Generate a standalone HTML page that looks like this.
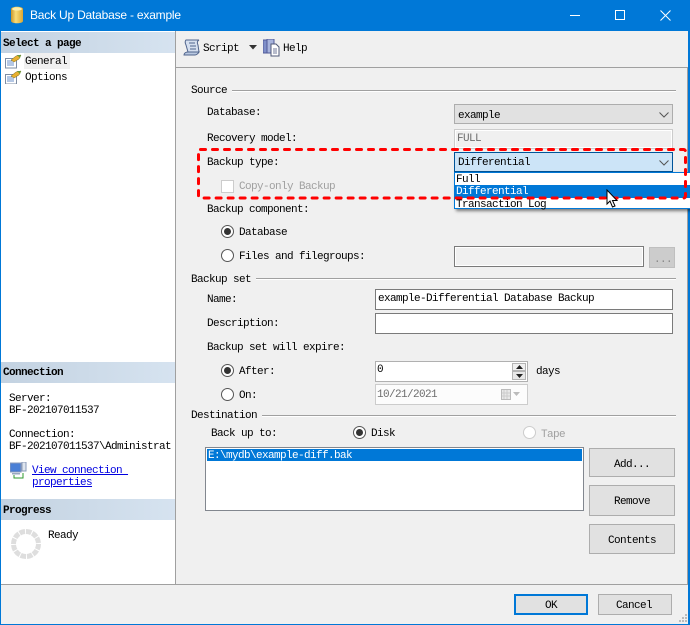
<!DOCTYPE html>
<html><head><meta charset="utf-8"><style>
html,body{margin:0;padding:0;background:#fff}
#w{position:relative;width:690px;height:625px;overflow:hidden;background:#f0f0f0;font-family:"Liberation Mono",monospace;font-size:11px;letter-spacing:-.6px;color:#000}
#w div,#w span.t{position:absolute;box-sizing:border-box;white-space:pre}
.t{line-height:14px;height:14px;margin-top:1px}
.g{color:#a0a0a0}
.b{font-weight:bold}
.hd{left:1px;width:174px;height:21px;background:linear-gradient(90deg,#c3d2e1,#d6e3f0)}
.ln{height:1px;background:#a0a0a0;box-shadow:0 1px 0 #fff}
.in{background:#fff;border:1px solid #7a7a7a}
.btn{background:#e1e1e1;border:1px solid #adadad}
svg{position:absolute}
</style></head><body><div id="w">
<div style="left:0;top:0;width:690px;height:625px;border:1px solid #0078d7;border-right-width:2px;border-bottom-width:1px"></div>
<div style="left:0;top:0;width:690px;height:31px;background:#0078d7"></div>
<svg style="left:10px;top:6px" width="14" height="18" viewBox="0 0 14 18"><defs><linearGradient id="c" x1="0" x2="1"><stop offset="0" stop-color="#c9962a"/><stop offset=".4" stop-color="#f8dc78"/><stop offset="1" stop-color="#d9a632"/></linearGradient></defs><path d="M1 3c0-3 12-3 12 0v12c0 3-12 3-12 0z" fill="url(#c)"/><ellipse cx="7" cy="3" rx="5" ry="1.6" fill="#fbeeb0"/></svg>
<span class="t" style="left:30px;top:7px;font:12px/15px 'Liberation Sans',sans-serif;letter-spacing:-.2px;color:#fff;height:15px">Back Up Database - example</span>
<div style="left:570px;top:15px;width:10px;height:1px;background:#fff"></div>
<div style="left:615px;top:10px;width:10px;height:10px;border:1px solid #fff"></div>
<svg style="left:660px;top:10px" width="11" height="11"><path d="M.5.5l10 10M10.500.5l-10 10" stroke="#fff" fill="none"/></svg>

<div style="left:1px;top:31px;width:174px;height:553px;background:#fff"></div>
<div style="left:175px;top:31px;width:1px;height:553px;background:#a0a0a0"></div>
<div style="left:1px;top:584px;width:687px;height:1px;background:#a0a0a0"></div>
<div style="left:176px;top:67px;width:512px;height:1px;background:#a0a0a0"></div>
<div style="left:687px;top:67px;width:1px;height:517px;background:#a0a0a0"></div>

<div class="hd" style="top:32px"></div>
<span class="t b" style="left:3px;top:36px">Select a page</span>
<div style="left:24px;top:53px;width:46px;height:16px;background:#f0f0f0"></div>
<svg style="left:5px;top:54px" width="17" height="30" viewBox="0 0 17 30"><g id="ic"><rect x=".5" y="4.500" width="11" height="9.500" fill="#fff" stroke="#7d8ca3"/><path d="M2 7h7M2 9h7M2 11h7" stroke="#6a8fc8"/><path d="M6 6l5-4 5-1-2 4-5 3z" fill="#e8b030" stroke="#7c6a20" stroke-width=".5"/><path d="M12 1l4 0-1 3z" fill="#6a9a3a"/></g><use href="#ic" y="16"/></svg>
<span class="t" style="left:25px;top:54px">General</span>
<span class="t" style="left:25px;top:70px">Options</span>

<div class="hd" style="top:362px"></div>
<span class="t b" style="left:3px;top:365px">Connection</span>
<span class="t" style="left:9px;top:391px">Server:</span>
<span class="t" style="left:9px;top:403px">BF-202107011537</span>
<span class="t" style="left:9px;top:427px">Connection:</span>
<span class="t" style="left:9px;top:439px">BF-202107011537\Administrat</span>
<svg style="left:10px;top:462px" width="17" height="17" viewBox="0 0 17 17"><rect x="0" y="1" width="11" height="9" fill="#4a7fd6" stroke="#8a9ab8"/><rect x="2" y="11" width="8" height="1.500" fill="#9aa8c0"/><rect x="12" y="0" width="4" height="9" fill="#dfe5ee" stroke="#8a9ab8"/><path d="M4 13v3h9v-5" stroke="#2f9a2f" fill="none"/></svg>
<span class="t" style="left:32px;top:463px;color:#0000e0;text-decoration:underline">View connection </span>
<span class="t" style="left:32px;top:475px;color:#0000e0;text-decoration:underline">properties</span>

<div class="hd" style="top:499px"></div>
<span class="t b" style="left:3px;top:503px">Progress</span>
<svg style="left:11px;top:529px" width="30" height="30" viewBox="0 0 30 30"><circle cx="15" cy="15" r="12.500" fill="none" stroke="#dedede" stroke-width="5" stroke-dasharray="5.500 1"/></svg>
<span class="t" style="left:48px;top:528px">Ready</span>

<svg style="left:183px;top:39px" width="18" height="18" viewBox="0 0 18 18"><path d="M3 1h13c-2 1-2 3-1 5l1 7H5L3 6C2 4 2 2 3 1z" fill="#d5dfef" stroke="#50648c"/><path d="M5 13c-2 0-4 1-4 3h11c1 0 3-1 4-3z" fill="#b9c8e0" stroke="#50648c"/><path d="M6 4h6M7 7h6M7 10h6" stroke="#50648c"/></svg>
<span class="t" style="left:203px;top:41px">Script</span>
<svg style="left:249px;top:45px" width="9" height="5"><path d="M0 0h8L4 4.500z" fill="#333"/></svg>
<svg style="left:263px;top:39px" width="17" height="18" viewBox="0 0 17 18"><rect x="0" y="1" width="8" height="13" fill="#7f8fc8" stroke="#505a98"/><rect x="4" y="0" width="7" height="14" fill="#a8b4dc" stroke="#505a98"/><path d="M8 5h5l3 3v9H8z" fill="#fff" stroke="#505a78"/><path d="M10 10h4M10 12h4M10 14h4" stroke="#707a98"/></svg>
<span class="t" style="left:283px;top:41px">Help</span>

<span class="t" style="left:191px;top:83px">Source</span>
<div class="ln" style="left:232px;top:90px;width:444px"></div>
<span class="t" style="left:207px;top:105px">Database:</span>
<span class="t" style="left:207px;top:131px">Recovery model:</span>
<div style="left:454px;top:104px;width:219px;height:20px;background:#e1e1e1;border:1px solid #adadad"></div>
<span class="t" style="left:458px;top:108px">example</span>
<svg style="left:659px;top:112px" width="10" height="6"><path d="M.5.500l4.500 4.500 4.500-4.500" stroke="#555" fill="none"/></svg>
<div style="left:454px;top:129px;width:219px;height:20px;border:1px solid #ccc;box-shadow:inset 0 0 0 1px #fff"></div>
<span class="t" style="left:457px;top:131px;color:#6d6d6d">FULL</span>
<span class="t" style="left:207px;top:155px">Backup type:</span>
<div style="left:221px;top:180px;width:13px;height:13px;background:#fff;border:1px solid #ccc"></div>
<span class="t g" style="left:239px;top:179px">Copy-only Backup</span>
<span class="t" style="left:207px;top:202px">Backup component:</span>

<svg style="left:221px;top:225px" width="13" height="13"><circle cx="6.500" cy="6.500" r="6" fill="#fff" stroke="#555"/><circle cx="6.500" cy="6.500" r="3.500" fill="#333"/></svg>
<span class="t" style="left:239px;top:225px">Database</span>
<svg style="left:221px;top:249px" width="13" height="13"><circle cx="6.500" cy="6.500" r="6" fill="#fff" stroke="#555"/></svg>
<span class="t" style="left:239px;top:249px">Files and filegroups:</span>
<div style="left:454px;top:246px;width:190px;height:21px;background:#f0f0f0;border:1px solid #7a7a7a;box-shadow:inset 0 0 0 1px #fff"></div>
<div style="left:649px;top:247px;width:26px;height:21px;background:#ccc;border:1px solid #bfbfbf"></div>
<span class="t" style="left:654px;top:252px;color:#888">...</span>

<span class="t" style="left:191px;top:272px">Backup set</span>
<div class="ln" style="left:256px;top:278px;width:420px"></div>
<span class="t" style="left:207px;top:292px">Name:</span>
<div class="in" style="left:375px;top:289px;width:298px;height:21px"></div>
<span class="t" style="left:378px;top:291px">example-Differential Database Backup</span>
<span class="t" style="left:207px;top:316px">Description:</span>
<div class="in" style="left:375px;top:313px;width:298px;height:21px"></div>
<span class="t" style="left:207px;top:340px">Backup set will expire:</span>

<svg style="left:221px;top:364px" width="13" height="13"><circle cx="6.500" cy="6.500" r="6" fill="#fff" stroke="#555"/><circle cx="6.500" cy="6.500" r="3.500" fill="#333"/></svg>
<span class="t" style="left:239px;top:364px">After:</span>
<div style="left:375px;top:361px;width:153px;height:21px;background:#fff;border:1px solid #b0b0b0"></div>
<span class="t" style="left:377px;top:362px">0</span>
<div style="left:512px;top:363px;width:14px;height:8px;background:#f0f0f0;border:1px solid #b4b4b4"></div>
<div style="left:512px;top:371px;width:14px;height:9px;background:#e8e8e8;border:1px solid #b4b4b4"></div>
<svg style="left:516px;top:365px" width="7" height="13"><path d="M3.500 0L7 4H0zM0 9h7l-3.500 4z" fill="#222"/></svg>
<span class="t" style="left:536px;top:364px">days</span>
<svg style="left:221px;top:388px" width="13" height="13"><circle cx="6.500" cy="6.500" r="6" fill="#fff" stroke="#555"/></svg>
<span class="t" style="left:239px;top:388px">On:</span>
<div style="left:375px;top:384px;width:153px;height:21px;background:#fcfcfc;border:1px solid #ccc"></div>
<span class="t" style="left:377px;top:387px;color:#6d6d6d">10/21/2021</span>
<svg style="left:501px;top:388px" width="25" height="13"><rect x=".5" y="1.500" width="9" height="10" fill="#e8e8e8" stroke="#bbb"/><path d="M3 2v9M6 2v9M1 5h8M1 8h8" stroke="#ccc"/><path d="M12 4h7l-3.500 4z" fill="#bbb"/></svg>

<span class="t" style="left:191px;top:408px">Destination</span>
<div class="ln" style="left:262px;top:415px;width:414px"></div>
<span class="t" style="left:211px;top:426px">Back up to:</span>
<svg style="left:353px;top:426px" width="13" height="13"><circle cx="6.500" cy="6.500" r="6" fill="#fff" stroke="#555"/><circle cx="6.500" cy="6.500" r="3.500" fill="#333"/></svg>
<span class="t" style="left:371px;top:426px">Disk</span>
<svg style="left:523px;top:426px" width="13" height="13"><circle cx="6.500" cy="6.500" r="6" fill="#fff" stroke="#ccc"/></svg>
<span class="t g" style="left:541px;top:427px">Tape</span>
<div style="left:205px;top:447px;width:379px;height:64px;background:#fff;border:1px solid #82878f"></div>
<div style="left:207px;top:449px;width:375px;height:12px;background:#0078d7"></div>
<span class="t" style="left:208px;top:448px;color:#fff">E:\mydb\example-diff.bak</span>
<div class="btn" style="left:589px;top:448px;width:86px;height:29px"></div>
<span class="t" style="left:614px;top:457px">Add...</span>
<div class="btn" style="left:589px;top:485px;width:86px;height:31px"></div>
<span class="t" style="left:614px;top:494px">Remove</span>
<div class="btn" style="left:589px;top:524px;width:86px;height:30px"></div>
<span class="t" style="left:608px;top:533px">Contents</span>

<div style="left:514px;top:594px;width:74px;height:21px;background:#e1e1e1;border:2px solid #0078d7"></div>
<span class="t" style="left:545px;top:598px">OK</span>
<div class="btn" style="left:598px;top:594px;width:74px;height:21px"></div>
<span class="t" style="left:616px;top:598px">Cancel</span>
<svg style="left:678px;top:613px" width="10" height="11"><path d="M7 1h2v2H7zM4 4h2v2H4zM7 4h2v2H7zM1 7h2v2H1zM4 7h2v2H4zM7 7h2v2H7z" fill="#bbb"/></svg>

<div style="left:454px;top:152px;width:219px;height:20px;background:#cce4f7;border:1px solid #005499"></div>
<span class="t" style="left:458px;top:155px">Differential</span>
<svg style="left:659px;top:160px" width="10" height="6"><path d="M.5.500l4.500 4.500 4.500-4.500" stroke="#555" fill="none"/></svg>
<div style="left:454px;top:172px;width:240px;height:37px;background:#fff;border:1px solid #0078d7;box-shadow:2px 2px 3px rgba(0,0,0,.5)"></div>
<div style="left:455px;top:185px;width:235px;height:13px;background:#0078d7"></div>
<span class="t" style="left:456px;top:172px;color:#000">Full</span>
<span class="t" style="left:456px;top:184px;color:#fff">Differential</span>
<span class="t" style="left:456px;top:197px;color:#000">Transaction Log</span>

<svg style="left:0;top:0" width="690" height="625"><rect x="198.500" y="149.500" width="487" height="48.500" rx="2" fill="none" stroke="#f00" stroke-width="3" stroke-dasharray="5 7" stroke-linecap="round"/></svg>
<svg style="left:606px;top:189px" width="14" height="20"><path d="M1 1v14l3-3 2.500 6 2.500-1-2.500-5.500h4.500z" fill="#fff" stroke="#000"/></svg>
</div></body></html>
